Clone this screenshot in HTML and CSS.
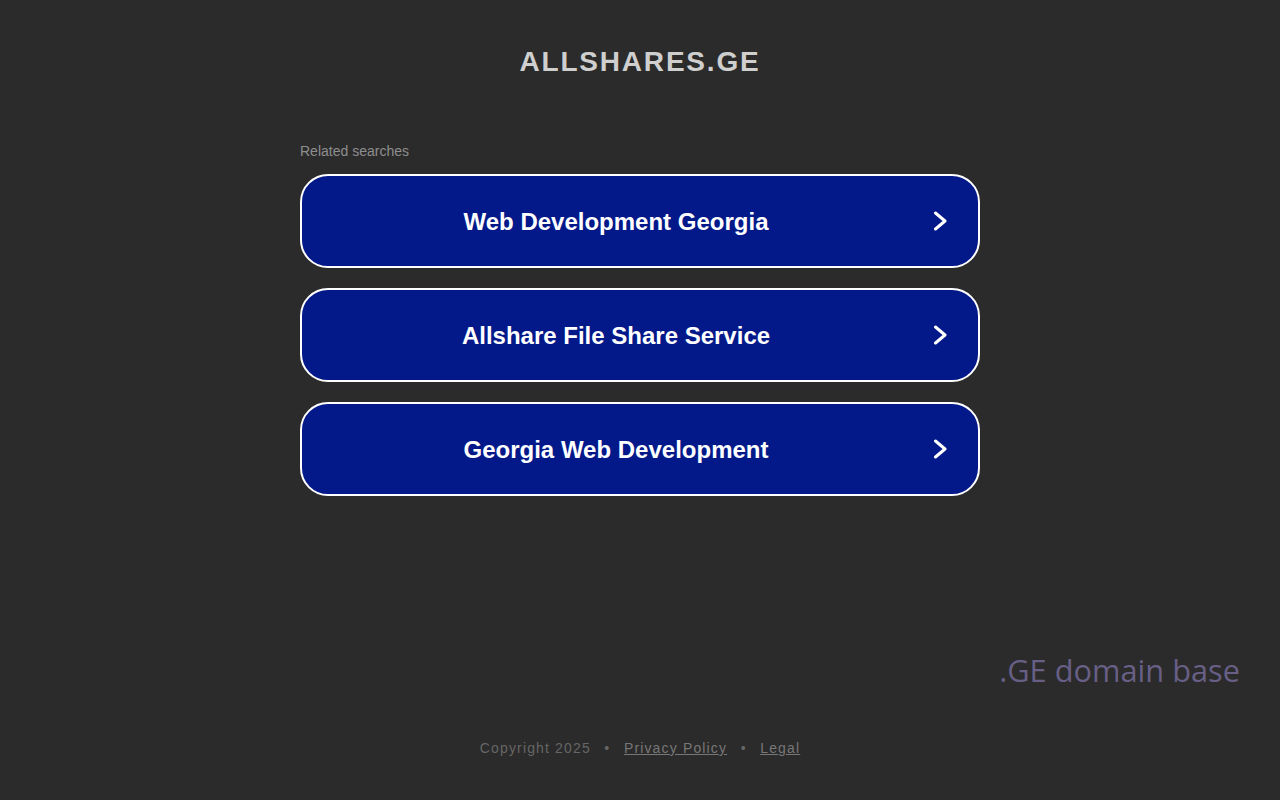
FILE: index.html
```html
<!DOCTYPE html>
<html>
<head>
<meta charset="utf-8">
<link rel="stylesheet" href="styles.css">
</head>
<body>
<div class="page">
  <header class="header"><h1 class="title">ALLSHARES.GE</h1></header>
  <main class="main">
    <div class="related">Related searches</div>
    <ul class="list">
      <li><a class="btn" href="#"><span class="btn-text">Web Development Georgia</span><svg class="chev" width="18" height="20" viewBox="0 0 18 20"><path d="M5.5 2 L15 10 L5.5 18" fill="none" stroke="#fff" stroke-width="3" stroke-linecap="round" stroke-linejoin="round"/></svg></a></li>
      <li><a class="btn" href="#"><span class="btn-text">Allshare File Share Service</span><svg class="chev" width="18" height="20" viewBox="0 0 18 20"><path d="M5.5 2 L15 10 L5.5 18" fill="none" stroke="#fff" stroke-width="3" stroke-linecap="round" stroke-linejoin="round"/></svg></a></li>
      <li><a class="btn" href="#"><span class="btn-text">Georgia Web Development</span><svg class="chev" width="18" height="20" viewBox="0 0 18 20"><path d="M5.5 2 L15 10 L5.5 18" fill="none" stroke="#fff" stroke-width="3" stroke-linecap="round" stroke-linejoin="round"/></svg></a></li>
    </ul>
  </main>
  <div class="brand">.GE domain base</div>
  <footer class="footer">
    <span>Copyright 2025</span><span class="dot">•</span><a href="#">Privacy Policy</a><span class="dot">•</span><a href="#">Legal</a>
  </footer>
</div>
</body>
</html>
```
FILE: styles.css
```css
html, body {
  margin: 0;
  padding: 0;
  background: #2b2b2b;
  height: 100%;
}
body {
  font-family: "Liberation Sans", Arial, sans-serif;
}
.page {
  width: 1280px;
  height: 800px;
  display: flex;
  flex-direction: column;
}
.header {
  height: 122px;
  display: flex;
  justify-content: center;
}
.title {
  margin: 45px 0 0 0;
  font-size: 28px;
  font-weight: bold;
  letter-spacing: 1.8px;
  color: #cfcfcf;
  line-height: 34px;
  height: 34px;
}
.main {
  width: 680px;
  margin: 0 auto;
}
.related {
  font-size: 14px;
  color: #8e8e8e;
  line-height: 16px;
  margin-top: 21px;
  margin-bottom: 15px;
}
.list {
  list-style: none;
  margin: 0;
  padding: 0;
  display: flex;
  flex-direction: column;
  gap: 20px;
}
.btn {
  box-sizing: border-box;
  height: 94px;
  border: 2px solid #ffffff;
  border-radius: 28px;
  background: #03198a;
  display: flex;
  align-items: center;
  padding-right: 30px;
  text-decoration: none;
}
.btn-text {
  flex: 1;
  text-align: center;
  color: #ffffff;
  font-size: 24px;
  font-weight: bold;
  padding-top: 2px;
}
.chev {
  display: block;
}
.brand {
  margin-top: auto;
  align-self: flex-end;
  margin-right: 40px;
  font-family: "Open Sans", sans-serif;
  font-size: 30.75px;
  color: #675f85;
  line-height: 40px;
}
.footer {
  margin-top: 50px;
  height: 60px;
  display: flex;
  justify-content: center;
  font-size: 14px;
  letter-spacing: 1.15px;
  color: #666666;
  line-height: 16px;
}
.footer a {
  color: #777777;
  text-decoration: underline;
}
.dot {
  margin: 0 13.5px;
}
```
